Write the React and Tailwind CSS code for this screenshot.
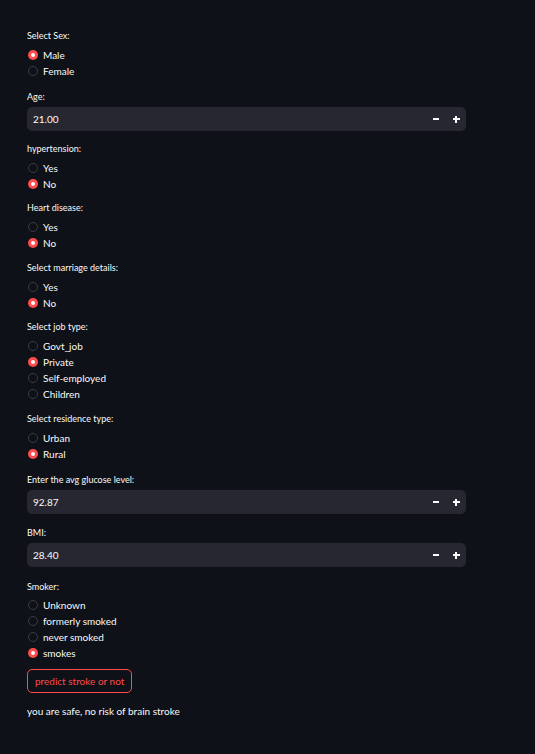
import { useState } from 'react';

function Radio({ label, options, value, onChange, gap = 'mt-[10px]', tight = false }) {
  return (
    <div className={gap}>
      <div className="h-[14px] text-[9px] leading-[14px] text-[#fafafa]">{label}</div>
      <div className={`${tight ? 'mt-[3px]' : 'mt-[4px]'} flex flex-col`}>
        {options.map((o) => (
          <label key={o} className="flex h-[16px] cursor-pointer items-center" onClick={() => onChange(o)}>
            {value === o ? (
              <span className="ml-[1px] flex h-[10px] w-[10px] items-center justify-center rounded-full bg-[#ff4b4b]">
                <span className="h-[4px] w-[4px] rounded-full bg-white" />
              </span>
            ) : (
              <span className="ml-[1px] h-[10px] w-[10px] rounded-full border border-[#3a3c44]" />
            )}
            <span className="ml-[5px] text-[10px] text-[#fafafa]">{o}</span>
          </label>
        ))}
      </div>
    </div>
  );
}

function NumberInput({ label, value, setValue, step, gap = 'mt-[12px]' }) {
  return (
    <div className={gap}>
      <div className="h-[14px] text-[9px] leading-[14px] text-[#fafafa]">{label}</div>
      <div className="mt-[3px] flex h-[24px] w-[439px] items-center rounded-[5px] bg-[#262730] pl-[6px]">
        <span className="flex-1 text-[10px] text-[#fafafa]">{value.toFixed(2)}</span>
        <button className="flex h-[20px] w-[20px] items-center justify-center" onClick={() => setValue(value - step)}>
          <span className="h-[1.5px] w-[6px] bg-[#fafafa]" />
        </button>
        <button className="relative flex h-[20px] w-[20px] items-center justify-center" onClick={() => setValue(value + step)}>
          <span className="h-[1.5px] w-[7px] bg-[#fafafa]" />
          <span className="absolute h-[7px] w-[1.5px] bg-[#fafafa]" />
        </button>
      </div>
    </div>
  );
}

export default function App() {
  const [form, setForm] = useState({
    sex: 'Male',
    age: 21,
    hyper: 'No',
    heart: 'No',
    married: 'No',
    job: 'Private',
    residence: 'Rural',
    glucose: 92.87,
    bmi: 28.4,
    smoker: 'smokes',
  });
  const set = (key) => (v) => setForm((prev) => ({ ...prev, [key]: v }));

  return (
    <div className="min-h-[754px] bg-[#0e1117] px-[27px] pt-[29px] pb-[30px] font-['Lato',sans-serif]">
      <Radio label="Select Sex:" options={['Male', 'Female']} value={form.sex} onChange={set('sex')} gap="" />
      <NumberInput label="Age:" value={form.age} setValue={set('age')} step={1} gap="mt-[11px]" />
      <Radio label="hypertension:" options={['Yes', 'No']} value={form.hyper} onChange={set('hyper')} gap="mt-[11px]" />
      <Radio label="Heart disease:" options={['Yes', 'No']} value={form.heart} onChange={set('heart')} gap="mt-[9px]" />
      <Radio label="Select marriage details:" options={['Yes', 'No']} value={form.married} onChange={set('married')} />
      <Radio
        label="Select job type:"
        options={['Govt_job', 'Private', 'Self-employed', 'Children']}
        value={form.job}
        onChange={set('job')}
        gap="mt-[9px]"
      />
      <Radio label="Select residence type:" options={['Urban', 'Rural']} value={form.residence} onChange={set('residence')} gap="mt-[10px]" />
      <NumberInput label="Enter the avg glucose level:" value={form.glucose} setValue={set('glucose')} step={0.01} gap="mt-[11px]" />
      <NumberInput label="BMI:" value={form.bmi} setValue={set('bmi')} step={0.01} gap="mt-[12px]" />
      <Radio
        label="Smoker:"
        options={['Unknown', 'formerly smoked', 'never smoked', 'smokes']}
        value={form.smoker}
        onChange={set('smoker')}
        gap="mt-[13px]"
        tight
      />
      <button className="mt-[8px] flex h-[24px] items-center rounded-[5px] border border-[#ff4b4b] px-[7px] text-[10px] text-[#ff4b4b]">
        predict stroke or not
      </button>
      <div className="mt-[11px] text-[10px] text-[#fafafa]">you are safe, no risk of brain stroke</div>
    </div>
  );
}
